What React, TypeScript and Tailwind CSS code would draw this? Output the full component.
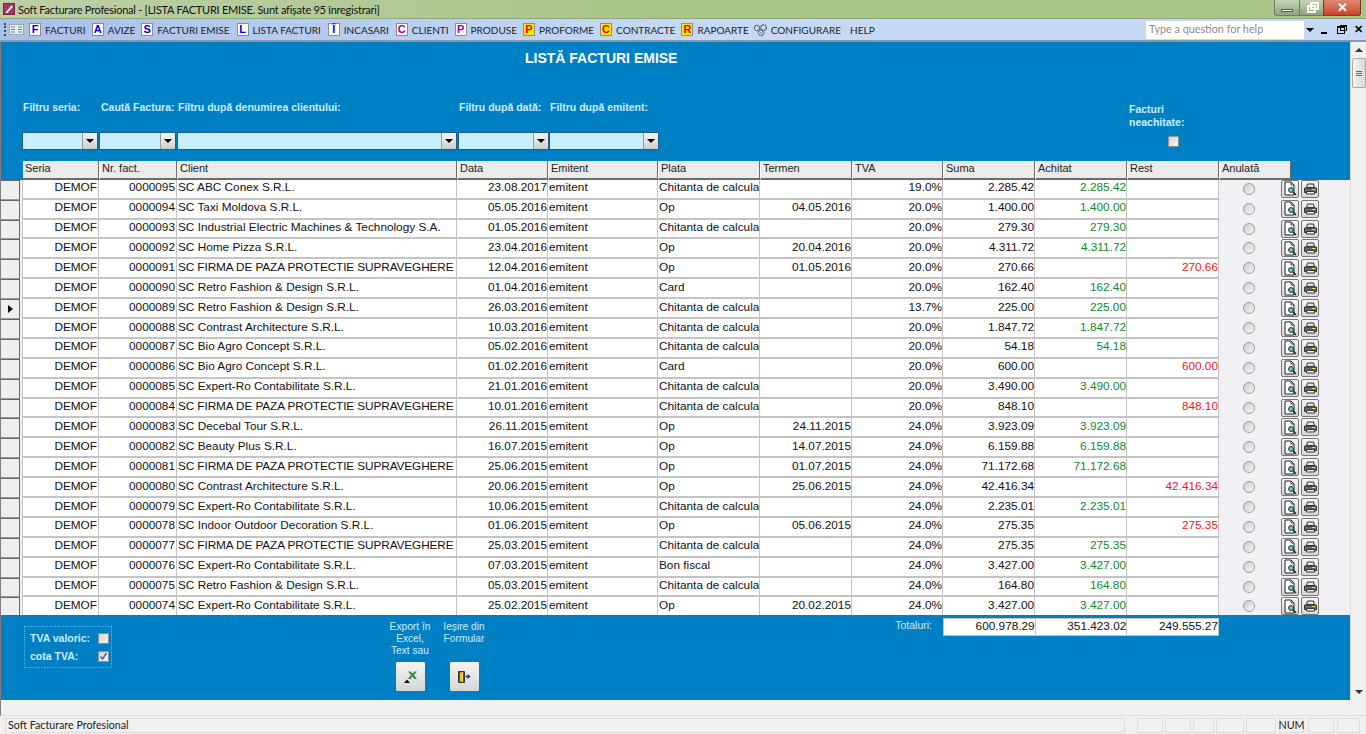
import React from "react";

type Row = [string, string, string, string, string, string, string, string, string];
const rows: Row[] = [
  ["0000095","SC ABC Conex S.R.L.","23.08.2017","Chitanta de calculator","","19.0%","2.285.42","2.285.42",""],
  ["0000094","SC Taxi Moldova S.R.L.","05.05.2016","Op","04.05.2016","20.0%","1.400.00","1.400.00",""],
  ["0000093","SC Industrial Electric Machines & Technology S.A.","01.05.2016","Chitanta de calculator","","20.0%","279.30","279.30",""],
  ["0000092","SC Home Pizza S.R.L.","23.04.2016","Op","20.04.2016","20.0%","4.311.72","4.311.72",""],
  ["0000091","SC FIRMA DE PAZA PROTECTIE SUPRAVEGHERE","12.04.2016","Op","01.05.2016","20.0%","270.66","","270.66"],
  ["0000090","SC Retro Fashion & Design S.R.L.","01.04.2016","Card","","20.0%","162.40","162.40",""],
  ["0000089","SC Retro Fashion & Design S.R.L.","26.03.2016","Chitanta de calculator","","13.7%","225.00","225.00",""],
  ["0000088","SC Contrast Architecture S.R.L.","10.03.2016","Chitanta de calculator","","20.0%","1.847.72","1.847.72",""],
  ["0000087","SC Bio Agro Concept S.R.L.","05.02.2016","Chitanta de calculator","","20.0%","54.18","54.18",""],
  ["0000086","SC Bio Agro Concept S.R.L.","01.02.2016","Card","","20.0%","600.00","","600.00"],
  ["0000085","SC Expert-Ro Contabilitate S.R.L.","21.01.2016","Chitanta de calculator","","20.0%","3.490.00","3.490.00",""],
  ["0000084","SC FIRMA DE PAZA PROTECTIE SUPRAVEGHERE","10.01.2016","Chitanta de calculator","","20.0%","848.10","","848.10"],
  ["0000083","SC Decebal Tour S.R.L.","26.11.2015","Op","24.11.2015","24.0%","3.923.09","3.923.09",""],
  ["0000082","SC Beauty Plus S.R.L.","16.07.2015","Op","14.07.2015","24.0%","6.159.88","6.159.88",""],
  ["0000081","SC FIRMA DE PAZA PROTECTIE SUPRAVEGHERE","25.06.2015","Op","01.07.2015","24.0%","71.172.68","71.172.68",""],
  ["0000080","SC Contrast Architecture S.R.L.","20.06.2015","Op","25.06.2015","24.0%","42.416.34","","42.416.34"],
  ["0000079","SC Expert-Ro Contabilitate S.R.L.","10.06.2015","Chitanta de calculator","","24.0%","2.235.01","2.235.01",""],
  ["0000078","SC Indoor Outdoor Decoration S.R.L.","01.06.2015","Op","05.06.2015","24.0%","275.35","","275.35"],
  ["0000077","SC FIRMA DE PAZA PROTECTIE SUPRAVEGHERE","25.03.2015","Chitanta de calculator","","24.0%","275.35","275.35",""],
  ["0000076","SC Expert-Ro Contabilitate S.R.L.","07.03.2015","Bon fiscal","","24.0%","3.427.00","3.427.00",""],
  ["0000075","SC Retro Fashion & Design S.R.L.","05.03.2015","Chitanta de calculator","","24.0%","164.80","164.80",""],
  ["0000074","SC Expert-Ro Contabilitate S.R.L.","25.02.2015","Op","20.02.2015","24.0%","3.427.00","3.427.00",""],
];

const headers = ["Seria","Nr. fact.","Client","Data","Emitent","Plata","Termen","TVA","Suma","Achitat","Rest","Anulată"];

const sans = "font-['Liberation_Sans',Arial,sans-serif]";
const ui = "font-['Lato','Noto_Sans',sans-serif]";

function LetterIcon({ l, kind }: { l: string; kind: "blue" | "purple" | "yellow" }) {
  const cls =
    kind === "blue"
      ? "bg-white text-[#0000e6]"
      : kind === "purple"
      ? "bg-white text-[#a0008c]"
      : "bg-[#ffe800] text-[#e00000]";
  return (
    <span className={`flex h-[13px] w-[12px] items-center justify-center border border-[#8c8c8c] text-[11px] font-bold leading-none ${sans} ${cls}`}>
      {l}
    </span>
  );
}

function Gear() {
  return (
    <svg width="15" height="14" viewBox="0 0 15 14" fill="none" stroke="#555" strokeWidth="1.3">
      <circle cx="4" cy="5" r="2.6" strokeDasharray="1.6 0.7" />
      <circle cx="10.6" cy="4.6" r="2.8" strokeDasharray="1.6 0.7" />
      <circle cx="8" cy="9.8" r="2.7" strokeDasharray="1.6 0.7" />
      <circle cx="8" cy="9.8" r="0.8" fill="#777" stroke="none" />
    </svg>
  );
}

const menu: { t: string; l: string; k: "blue" | "purple" | "yellow"; ml: string }[] = [
  { t: "FACTURI", l: "F", k: "blue", ml: "ml-0" },
  { t: "AVIZE", l: "A", k: "blue", ml: "ml-[6px]" },
  { t: "FACTURI EMISE", l: "S", k: "blue", ml: "ml-[6px]" },
  { t: "LISTA FACTURI", l: "L", k: "blue", ml: "ml-[7px]" },
  { t: "INCASARI", l: "Î", k: "blue", ml: "ml-[7px]" },
  { t: "CLIENTI", l: "C", k: "purple", ml: "ml-[7px]" },
  { t: "PRODUSE", l: "P", k: "purple", ml: "ml-[6px]" },
  { t: "PROFORME", l: "P", k: "yellow", ml: "ml-[6px]" },
  { t: "CONTRACTE", l: "C", k: "yellow", ml: "ml-[6px]" },
  { t: "RAPOARTE", l: "R", k: "yellow", ml: "ml-[6px]" },
];

function Combo({ w }: { w: string }) {
  return (
    <div className={`flex h-[18px] ${w} border border-[#1d5f8a] bg-[#c9eefe]`}>
      <div className="ml-auto flex w-[15px] items-center justify-center border-l border-[#9a9a9a] bg-gradient-to-b from-[#f6f6f6] to-[#cfcfcf]">
        <span className="h-0 w-0 border-x-[4px] border-t-[4px] border-x-transparent border-t-black" />
      </div>
    </div>
  );
}

function Preview() {
  return (
    <svg width="14" height="15" viewBox="0 0 14 15">
      <path d="M2 1h6l3 3v10H2z" fill="#fff" stroke="#222" strokeWidth="1" />
      <path d="M8 1v3h3" fill="none" stroke="#222" strokeWidth="0.8" />
      <circle cx="8" cy="9" r="2.4" fill="#5fd0dc" stroke="#222" strokeWidth="1" />
      <path d="M10 11l3 3" stroke="#222" strokeWidth="1.6" />
    </svg>
  );
}
function Printer() {
  return (
    <svg width="15" height="14" viewBox="0 0 15 14">
      <path d="M4.500 2h6l1 3.500h-8z" fill="#e4e4e4" stroke="#333" strokeWidth="1" />
      <path d="M1.500 6h12v4.500h-12z" fill="#6a6a6a" stroke="#333" strokeWidth="1" />
      <path d="M3.500 9.500h8V12h-8z" fill="#f2f2f2" stroke="#333" strokeWidth="1" />
      <path d="M9 7.500h3.500" stroke="#e8d44a" strokeWidth="1" />
    </svg>
  );
}

function Check({ on, cls = "" }: { on?: boolean; cls?: string }) {
  return (
    <span className={`flex h-[11px] w-[11px] items-center justify-center border border-[#8e8f8f] bg-gradient-to-br from-[#d4d4d4] to-[#f5f5f5] ${cls}`}>
      {on && (
        <svg width="9" height="9" viewBox="0 0 9 9" fill="none" stroke="#3a5fa8" strokeWidth="1.4">
          <path d="M1.500 4.500l2 2.500 4-6" />
        </svg>
      )}
    </span>
  );
}

export default function App() {
  return (
    <div className={`flex h-[734px] w-[1366px] flex-col overflow-hidden bg-[#f0f0f0] ${sans}`}>
      {/* Title bar */}
      <div className="flex h-[19px] items-center border-b border-[#8fa878] bg-gradient-to-r from-[#bccfa6] via-[#a9c588] to-[#a9c588]">
        <svg className="ml-[3px]" width="12" height="12" viewBox="0 0 12 12">
          <rect x="0.5" y="0.5" width="11" height="11" fill="#a33a5e" stroke="#7a2445" />
          <path d="M2.500 9.500L8.500 2.500l1.500 1.200L4 10.200z" fill="#fff" />
        </svg>
        <span className={`ml-[3px] text-[11px] leading-none tracking-[-0.26px] text-[#111] ${ui}`}>
          Soft Facturare Profesional - [LISTA FACTURI EMISE. Sunt afișate 95 înregistrari]
        </span>
        <div className="ml-auto mr-[5px] flex h-[16px] self-start">
          <div className="flex h-full w-[26px] items-center justify-center rounded-bl-[3px] border border-t-0 border-[#6d7f60] bg-gradient-to-b from-[#c4d3b5] to-[#8fa37f]">
            <span className="mt-[5px] h-[3px] w-[12px] border border-[#555] bg-white" />
          </div>
          <div className="flex h-full w-[23px] items-center justify-center border-b border-[#6d7f60] bg-gradient-to-b from-[#c4d3b5] to-[#8fa37f]">
            <span className="relative mt-[3px] h-[8px] w-[9px] border-2 border-white">
              <span className="absolute -right-[5px] -top-[5px] h-[8px] w-[9px] border-2 border-white" />
            </span>
          </div>
          <div className="flex h-full w-[38px] items-center justify-center rounded-br-[3px] border border-t-0 border-[#7a3a2a] bg-gradient-to-b from-[#e08a70] to-[#c8402a]">
            <span className={`text-[13px] font-bold leading-none text-white ${sans}`}>✕</span>
          </div>
        </div>
      </div>

      {/* Menu bar */}
      <div className={`flex h-[23px] items-center border-b-2 border-[#8c98a8] bg-gradient-to-r from-[#a9c0ea] via-[#c5d9f6] to-[#c5d9f6] text-[10px] text-[#222] ${ui}`}>
        <span className="ml-[4px] h-[13px] w-[2px] border-l-2 border-dotted border-[#445]" />
        <svg className="ml-[3px]" width="15" height="11" viewBox="0 0 15 11">
          <rect x="0.5" y="0.5" width="14" height="10" fill="#eef2f8" stroke="#9aa4b4" />
          <path d="M2 3h4M2 5.500h4M2 8h4M9 3h4M9 5.500h4M9 8h4" stroke="#6b7686" strokeWidth="1" />
        </svg>
        <div className="ml-[5px] flex items-center">
          {menu.map((m) => (
            <React.Fragment key={m.t}>
              <span className={m.ml}>
                <LetterIcon l={m.l} kind={m.k} />
              </span>
              <span className="ml-[4px] whitespace-nowrap leading-none">{m.t}</span>
            </React.Fragment>
          ))}
          <span className="ml-[4px]"><Gear /></span>
          <span className="ml-[3px] leading-none">CONFIGURARE</span>
          <span className="ml-[9px] leading-none">HELP</span>
        </div>
        <div className="ml-auto flex items-center">
          <div className="flex h-[18px] w-[170px] items-center bg-white pl-[3px] text-[10.8px] text-[#8a8a8a]">
            Type a question for help
            <span className="ml-auto flex h-full w-[12px] items-center justify-center bg-[#c5d9f6]">
              <span className="h-0 w-0 border-x-[4px] border-t-[4px] border-x-transparent border-t-black" />
            </span>
          </div>
          <div className="ml-[5px] mr-[1px] flex w-[44px] items-center justify-between pr-[2px] text-[13px] font-bold leading-none text-black">
            <span className="mt-[6px] h-[2px] w-[6px] bg-black" />
            <span className="relative mx-[6px] h-[8px] w-[8px] border border-t-2 border-black">
              <span className="absolute -right-[3px] -top-[3px] h-[6px] w-[7px] border border-t-2 border-black" />
            </span>
            <span className={`text-[11px] ${sans}`}>✕</span>
          </div>
        </div>
      </div>

      {/* Body */}
      <div className="flex h-[658px]">
        <div className="flex w-[1350px] flex-col border-l border-[#7f7f7f] bg-[#0080c4]">
          {/* Header area */}
          <div className="h-[119px] text-[10.5px] font-bold text-[#cdeeff]">
            <div className="ml-[524px] pt-[8px] text-[14px] leading-[16px] text-white">LISTĂ FACTURI EMISE</div>
            <div className="flex">
              <div className="w-[1128px]">
                <div className="mt-[34px] flex h-[15px] items-center leading-none">
                  <span className="ml-[22px] w-[78px]">Filtru seria:</span>
                  <span className="w-[77px]">Caută Factura:</span>
                  <span className="w-[281px]">Filtru după denumirea clientului:</span>
                  <span className="w-[91px]">Filtru după dată:</span>
                  <span>Filtru după emitent:</span>
                </div>
                <div className="ml-[21px] mt-[17px] flex">
                  <Combo w="w-[76px]" />
                  <span className="ml-[1px]"><Combo w="w-[77px]" /></span>
                  <span className="ml-[1px]"><Combo w="w-[280px]" /></span>
                  <span className="ml-[1px]"><Combo w="w-[91px]" /></span>
                  <Combo w="w-[110px]" />
                </div>
              </div>
              <div className="mt-[37px] leading-[13px]">
                Facturi<br />neachitate:
                <Check cls="ml-[39px] mt-[7px]" />
              </div>
            </div>
          </div>

          {/* Table head */}
          <div className="ml-[22px] grid h-[19px] w-[1268px] grid-cols-[76px_78px_280px_91px_110px_102px_92px_91px_92px_92px_92px_72px]">
            {headers.map((h) => (
              <div key={h} className="flex items-start border-b-2 border-r border-b-[#6c6c6c] border-r-[#6c6c6c] bg-[#ebebeb] pl-[2px] pt-[2px] text-[11px] leading-none text-[#222] [&:not(:first-child)]:border-l [&:not(:first-child)]:border-l-white">
                {h}
              </div>
            ))}
          </div>

          {/* Rows */}
          <div className="flex h-[436px] flex-col overflow-hidden bg-[#f0f0f5]">
            {rows.map((r, i) => (
              <div key={r[0]} className="flex h-[19.9px] shrink-0">
                <div className="flex w-[19px] shrink-0 items-center justify-center border-y border-r border-b-[#999] border-r-[#666] border-t-[#666] bg-[#efefef]">
                  {i === 6 && <span className="h-0 w-0 border-y-[4px] border-l-[5px] border-y-transparent border-l-black" />}
                </div>
                <div className="ml-[2px] grid w-[1197px] grid-cols-[76px_78px_280px_91px_110px_102px_92px_91px_92px_92px_92px] bg-[#c4c4c4] pb-[2px] text-[11.8px] leading-none text-[#111]">
                  {[
                    { v: "DEMOF", a: "justify-end pr-[1px]" },
                    { v: r[0], a: "justify-end pr-[1px]" },
                    { v: r[1], a: r[1].includes("FIRMA") ? "tracking-[-0.1px]" : "" },
                    { v: r[2], a: "justify-end" },
                    { v: "emitent", a: "" },
                    { v: r[3], a: "" },
                    { v: r[4], a: "justify-end" },
                    { v: r[5], a: "justify-end" },
                    { v: r[6], a: "justify-end" },
                    { v: r[7], a: "justify-end text-[#0d8a2e]" },
                    { v: r[8], a: "justify-end text-[#f01818]" },
                  ].map((c, j) => (
                    <div key={j} className={`flex items-center overflow-hidden whitespace-nowrap border-l border-[#c4c4c4] bg-white pb-[1px] pl-[1px] ${c.a}`}>
                      {c.v}
                    </div>
                  ))}
                </div>
                <div className="flex w-[60px] shrink-0 items-start justify-center pt-[3px]">
                  <span className="h-[12px] w-[12px] rounded-full border border-[#9a9a9a] bg-gradient-to-br from-[#cfcfcf] to-[#f6f6f6]" />
                </div>
                <div className="ml-[2px] flex items-start gap-[2px]">
                  <span className="flex h-[18px] w-[18px] items-center justify-center rounded-[2px] border border-[#777] bg-gradient-to-b from-[#f5f5f5] to-[#d8d8d8]"><Preview /></span>
                  <span className="flex h-[18px] w-[18px] items-center justify-center rounded-[2px] border border-[#777] bg-gradient-to-b from-[#f5f5f5] to-[#d8d8d8]"><Printer /></span>
                </div>
              </div>
            ))}
          </div>

          {/* Footer */}
          <div className="flex h-[85px] text-[#cdeeff]">
            <div className="ml-[23px] mt-[11px] flex h-[42px] w-[88px] flex-col justify-center gap-[7px] border border-dotted border-[#6ab0d8] pl-[5px] text-[10.5px] font-bold leading-none">
              <div className="flex items-center">
                <span className="w-[68px]">TVA valoric:</span>
                <Check />
              </div>
              <div className="flex items-center">
                <span className="w-[68px]">cota TVA:</span>
                <Check on />
              </div>
            </div>
            <div className="ml-[268px] mt-[6px] w-[60px] text-center text-[10.2px] leading-[12px]">
              Export în<br />Excel,<br />Text sau
              <div className="mx-auto mt-[4px] flex h-[31px] w-[31px] items-center justify-center rounded-[2px] border border-[#3a6a8a] bg-gradient-to-b from-[#f4f4f4] to-[#d6d6d6]">
                <svg width="15" height="14" viewBox="0 0 15 14">
                  <path d="M5 1.500l2.500 0 2 2 2-2 2.500 0-3 3.500 3 4-2.500 0-2-2.500-2 2.500-2.500 0 3-4z" fill="#2e8b3d" />
                  <path d="M1 13l3-3.500 3 3.500z" fill="#111" />
                </svg>
              </div>
            </div>
            <div className="ml-[-6px] mt-[6px] w-[60px] text-center text-[10.2px] leading-[12px]">
              Ieșire din<br />Formular
              <div className="mx-auto mt-[16px] flex h-[31px] w-[31px] items-center justify-center rounded-[2px] border border-[#3a6a8a] bg-gradient-to-b from-[#f4f4f4] to-[#d6d6d6]">
                <svg width="16" height="14" viewBox="0 0 16 14">
                  <path d="M2.500 1.500h6v11h-6z" fill="#6b5c10" stroke="#333" strokeWidth="1" />
                  <path d="M4 3l3-1.200v10.400l-3-1z" fill="#e6c93a" />
                  <path d="M9.500 6.500h2" stroke="#1a1a9a" strokeWidth="1.500" />
                  <path d="M11.500 4l3 2.500-3 2.500z" fill="#1a1a9a" />
                </svg>
              </div>
            </div>
            <div className="ml-auto mr-[131px] flex items-start">
              <span className="mr-[11px] mt-[5px] text-[10.5px] leading-none">Totaluri:</span>
              <div className="mt-[3px] grid h-[18px] w-[276px] grid-cols-3 gap-px border border-[#c4c4c4] bg-[#c4c4c4] text-[11.8px] leading-none text-[#111]">
                {["600.978.29","351.423.02","249.555.27"].map((t) => (
                  <div key={t} className="flex items-center justify-end bg-white">{t}</div>
                ))}
              </div>
            </div>
          </div>
        </div>

        {/* Scrollbar */}
        <div className="flex w-[16px] flex-col items-center border-l border-[#dcdcdc] bg-[#f0f0f0]">
          <div className="flex h-[16px] items-center justify-center">
            <span className="h-0 w-0 border-x-[4px] border-b-[4px] border-x-transparent border-b-[#333]" />
          </div>
          <div className="flex h-[30px] w-[14px] flex-col items-center justify-center gap-[1px] rounded-[2px] border border-[#a8a8a8] bg-gradient-to-r from-[#f4f4f4] to-[#d8d8d8]">
            <span className="h-px w-[6px] bg-[#666]" />
            <span className="h-px w-[6px] bg-[#666]" />
            <span className="h-px w-[6px] bg-[#666]" />
          </div>
          <div className="mt-auto flex h-[16px] items-center justify-center">
            <span className="h-0 w-0 border-x-[4px] border-t-[4px] border-x-transparent border-t-[#333]" />
          </div>
        </div>
      </div>

      {/* Lower strip */}
      <div className="h-[16px] border-b border-l border-b-[#dcdcdc] border-l-[#7f7f7f]" />

      {/* Status bar */}
      <div className={`flex h-[18px] items-center pt-[1px] text-[10.7px] leading-none text-[#222] ${ui}`}>
        <div className="ml-[5px] flex h-[15px] w-[1120px] items-center border border-[#dcdcdc] pl-[2px]">Soft Facturare Profesional</div>
        <div className="ml-[12px] flex h-[15px] gap-[2px]">
          <span className="w-[26px] border border-[#dcdcdc]" />
          <span className="w-[26px] border border-[#dcdcdc]" />
          <span className="w-[21px] border border-[#dcdcdc]" />
          <span className="w-[28px] border border-[#dcdcdc]" />
          <span className="w-[30px] border border-[#dcdcdc]" />
        </div>
        <div className="ml-[3px] flex h-[15px] w-[25px] items-center justify-center border border-[#dcdcdc]">NUM</div>
        <div className="ml-[4px] flex h-[15px] gap-[3px]">
          <span className="w-[26px] border border-[#dcdcdc]" />
          <span className="w-[23px] border border-[#dcdcdc]" />
        </div>
      </div>
    </div>
  );
}
